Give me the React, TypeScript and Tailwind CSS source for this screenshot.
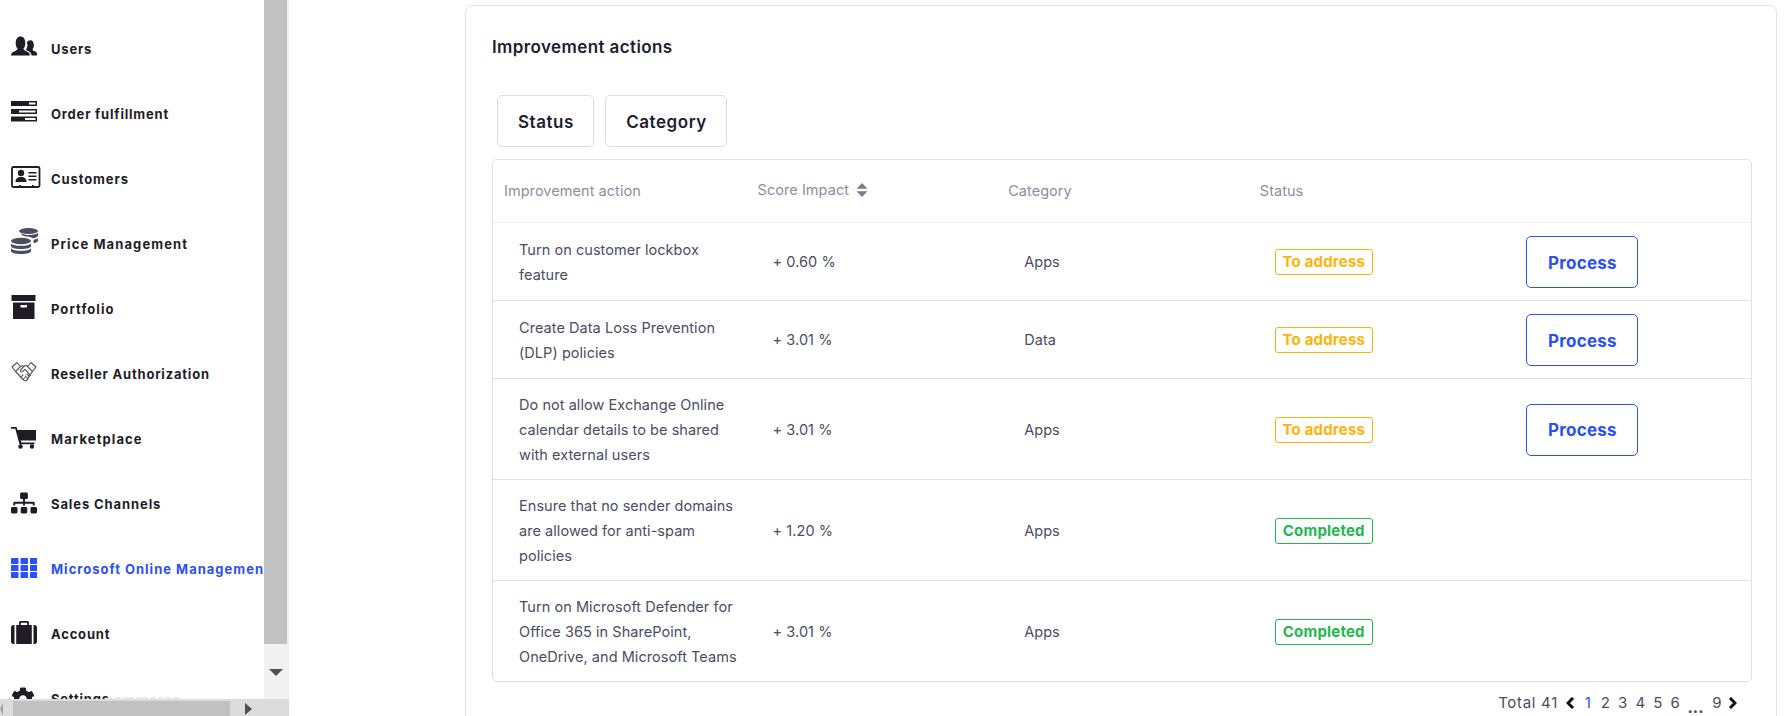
import { FaSitemap, FaCog } from "react-icons/fa";

const dark = "#1f1c26";

function UsersIcon() {
  return (
    <svg width="26" height="21" viewBox="0 0 26 20" preserveAspectRatio="none" fill={dark}>
      <path d="M0 18.500c0-2.600 2-3.400 4.200-4.300 1.800-.7 2.300-1.300 2.300-2.200-.9-.9-1.800-2.600-1.800-5C4.700 3 6.500 0.500 9.500 0.500s4.800 2.500 4.800 6.500c0 2.400-.9 4.100-1.800 5 0 .9.500 1.500 2.300 2.200 2.200.9 4.200 1.700 4.200 4.300z" />
      <path d="M15.800 6.500c.5-1.600 1.700-2.500 3.400-2.500 2.300 0 3.700 1.900 3.700 4.700 0 1.800-.7 3.200-1.400 3.900 0 .8.400 1.200 1.700 1.700 1.600.6 3 1.300 3 3.200v1h-5.600c-.4-2.600-2.300-3.700-4.500-4.600-.6-.3-1-.5-1.100-.8 1-1.300 1.500-3.200 1.500-5z" />
    </svg>
  );
}

function OrdersIcon() {
  return (
    <svg width="26" height="21" viewBox="0 0 26 21" fill={dark}>
      <path d="M0 0h26v5H0z" />
      <path d="M0 8h26v5H0z" />
      <path d="M0 15.500h26v5H0z" />
      <path d="M18 1.500h6.500v2H18zM8 9.500h16.500v2H8zM14 17h10.500v2H14z" fill="#fff" />
    </svg>
  );
}

function CustomersIcon() {
  return (
    <svg width="30" height="23" viewBox="0 0 30 23" fill={dark}>
      <rect x="1" y="1" width="27.500" height="20" rx="1.500" fill="none" stroke={dark} strokeWidth="1.800" />
      <circle cx="10" cy="7" r="3.200" />
      <path d="M4.500 16c0-3.400 2-5 5.500-5s5.500 1.600 5.500 5z" />
      <path d="M17.500 6h8v1.500h-8zM17.500 9.500h8v1.500h-8zM17.500 13h8v1.500h-8z" />
      <path d="M8 19h1.800v2.500H8zM21 19h1.800v2.500H21z" />
    </svg>
  );
}

function CoinsIcon() {
  const c = "#4a4c60";
  return (
    <svg width="28" height="26" viewBox="0 0 28 26" fill={c}>
      <ellipse cx="17.500" cy="3" rx="9.500" ry="3" />
      <path d="M27 5v2.500c0 1.300-2.500 2.500-5.500 2.800-1.500-1.200-4-1.800-6.500-1.800-1.500-.2-4-1-4.500-2V5c1.500 1.500 4 2 7 2s7.500-.5 9.500-2z" />
      <path d="M22.500 11.800c2-.3 3.500-.8 4.500-1.600v2.500c0 1-1.500 1.900-4.500 2.300z" />
      <ellipse cx="10" cy="13" rx="10" ry="3.200" />
      <path d="M0 15.500c1.500 1.700 5 2.300 10 2.300s8.500-.6 10-2.300v2.700c0 1.500-4 2.800-10 2.800s-10-1.300-10-2.800z" />
      <path d="M0 20.500c1.500 1.700 5 2.300 10 2.300s8.500-.6 10-2.300v2.500c0 1.700-4 3-10 3s-10-1.300-10-3z" />
    </svg>
  );
}

function BoxIcon() {
  return (
    <svg width="25" height="24" viewBox="0 0 25 24" fill={dark}>
      <path d="M0.500 0h24v6H.5z" />
      <path fillRule="evenodd" d="M2 7.500h21.500V24H2zM9.500 10v2.500h6.500V10z" />
    </svg>
  );
}

function HandshakeIcon() {
  return (
    <svg width="26" height="22" viewBox="0 0 26 22" fill="none" stroke="#55555f" strokeWidth="1.100" strokeLinejoin="round" strokeLinecap="round">
      <path d="M1 6l5-4.500 3.500 4-5 5z" />
      <path d="M25 6l-5-4.500-3.500 4 5 5z" />
      <path d="M9.500 5.500c1.500-1 2.500-.8 3.500-.2 1.200-.8 2.300-.9 3.500-.2" />
      <path d="M4.500 10.500l7 7.500c1 1.800 3.300 2 4.500.8l5.500-8.300" />
      <path d="M13 5.300L9.500 9c-.6 1 .8 2.200 2 1.500l2.500-2.200 5.500 6" />
      <path d="M10 16l2-2.200M12 18.500l2.300-2.500M15 20l2-2.300M18.500 15.500l-2.500-2.500M16.800 17.500l-2.300-2.500" />
    </svg>
  );
}

function CartIcon() {
  return (
    <svg width="26" height="22" viewBox="0 0 26 22" fill={dark}>
      <path d="M0 0h5.500l1 3H25v10.500H9.800l.5 2H23.500v1.800H8.500L4.300 1.700H0z" />
      <circle cx="9.500" cy="19.500" r="2.200" />
      <circle cx="21" cy="19.500" r="2.200" />
    </svg>
  );
}

function GridIcon() {
  const rows = [0, 7, 14];
  const cols = [0, 9.500, 19];
  return (
    <svg width="26" height="20" viewBox="0 0 26 20" fill="#2b50f5">
      {rows.map((y) => cols.map((x) => <rect key={`${x}-${y}`} x={x} y={y} width="7.500" height="6" rx="0.800" />))}
    </svg>
  );
}

function CaseIcon() {
  return (
    <svg width="26" height="23" viewBox="0 0 26 23" fill={dark}>
      <path d="M8 4V1.500C8 .7 8.700 0 9.500 0h7c.8 0 1.500.7 1.500 1.500V4h-1.800V1.800H9.800V4z" />
      <path d="M0 6.500C0 5 1 4 2.500 4H3.500v19H2.500C1 23 0 22 0 20.500z" />
      <path d="M5.200 4h15.600v19H5.200z" />
      <path d="M22.500 4h1C25 4 26 5 26 6.500v14c0 1.500-1 2.500-2.500 2.500h-1z" />
    </svg>
  );
}

const nav = [
  { label: "Users", icon: <UsersIcon />, box: "-mt-[7px]", track: "tracking-[0.8px]" },
  { label: "Order fulfillment", icon: <OrdersIcon />, box: "-mt-[6px]", track: "tracking-[0.8px]" },
  { label: "Customers", icon: <CustomersIcon />, box: "-mt-[5px]", track: "tracking-[0.9px]" },
  { label: "Price Management", icon: <CoinsIcon />, box: "-mt-[8px]", track: "tracking-[1.1px]" },
  { label: "Portfolio", icon: <BoxIcon />, box: "-mt-[6px]", track: "tracking-[1.05px]" },
  { label: "Reseller Authorization", icon: <HandshakeIcon />, box: "-mt-[5px]", track: "tracking-[0.8px]" },
  { label: "Marketplace", icon: <CartIcon />, box: "-mt-[3px]", track: "tracking-[1.1px]" },
  { label: "Sales Channels", icon: <FaSitemap size={26} color={dark} />, box: "-mt-[4px]", track: "tracking-[0.9px]" },
  { label: "Microsoft Online Management", icon: <GridIcon />, box: "-mt-[4px]", track: "tracking-[1px]", active: true },
  { label: "Account", icon: <CaseIcon />, box: "-mt-[4px]", track: "tracking-[0.8px]" },
  { label: "Settings", icon: <FaCog size={24} color={dark} />, box: "-mt-[2px]", track: "tracking-[0.8px]" },
];

type Row = {
  name: string[];
  score: string;
  category: string;
  status: "To address" | "Completed";
  process?: boolean;
};

const rows: Row[] = [
  { name: ["Turn on customer lockbox", "feature"], score: "+ 0.60 %", category: "Apps", status: "To address", process: true },
  { name: ["Create Data Loss Prevention", "(DLP) policies"], score: "+ 3.01 %", category: "Data", status: "To address", process: true },
  { name: ["Do not allow Exchange Online", "calendar details to be shared", "with external users"], score: "+ 3.01 %", category: "Apps", status: "To address", process: true },
  { name: ["Ensure that no sender domains", "are allowed for anti-spam", "policies"], score: "+ 1.20 %", category: "Apps", status: "Completed" },
  { name: ["Turn on Microsoft Defender for", "Office 365 in SharePoint,", "OneDrive, and Microsoft Teams"], score: "+ 3.01 %", category: "Apps", status: "Completed" },
];

function Sidebar() {
  return (
    <aside className="w-[289px] shrink-0 h-[716px] flex flex-col bg-white">
      <div className="flex flex-1 min-h-0">
        <div className="w-[264px] overflow-hidden relative">
          <nav className="pt-[17px]">
            {nav.map((n) => (
              <div key={n.label} className="h-[65px] flex items-center whitespace-nowrap">
                <div className={`w-[51px] pl-[11px] shrink-0 flex ${n.box}`}>{n.icon}</div>
                <span className={`text-[13px] font-bold ${n.track} ${n.active ? "text-[#2b50f5]" : "text-[#1f1c26]"}`}>
                  {n.label}
                </span>
              </div>
            ))}
          </nav>
          <span className="absolute left-[105px] top-[692px] text-[15px] leading-[18px] text-[#e2e2e2]">commerce</span>
        </div>
        <div className="w-[25px] flex flex-col bg-[#f1f1f1]">
          <div className="h-[644px] w-[23px] bg-[#c1c1c1]" />
          <div className="flex-1 flex items-center justify-center pr-[2px] pt-[2px]">
            <div className="w-0 h-0 border-l-[7px] border-r-[7px] border-t-[7px] border-l-transparent border-r-transparent border-t-[#505050]" />
          </div>
        </div>
      </div>
      <div className="h-[17px] bg-[#dcdcdc] flex items-end relative">
        <div className="w-[13px] flex items-center h-[15px]">
          <div className="w-0 h-0 border-r-[3px] border-y-[6px] border-y-transparent border-r-[#a0a0a0]" />
        </div>
        <div className="w-[217px] h-[15px] bg-[#c1c1c1]" />
        <div className="flex-1 flex items-center h-[15px] pl-[15px]">
          <div className="w-0 h-0 border-l-[7px] border-y-[6px] border-y-transparent border-l-[#505050]" />
        </div>
      </div>
    </aside>
  );
}

function Badge({ status }: { status: Row["status"] }) {
  const cls = status === "Completed" ? "text-[#1fb84f] border-[#1fb84f]" : "text-[#ffb20a] border-[#ffb20a]";
  return (
    <span className={`inline-flex items-center justify-center w-[98px] h-[26px] pt-[1px] rounded-[3px] border text-[15px] font-bold tracking-[0.2px] ${cls}`}>
      {status}
    </span>
  );
}

function SortIcon() {
  return (
    <svg width="12" height="14" viewBox="0 0 12 14" fill="#7b7d8e">
      <path d="M6 0l5.500 5.800H.5z" />
      <path d="M6 14L.5 8.200h11z" />
    </svg>
  );
}

function Pagination() {
  const pages = ["1", "2", "3", "4", "5", "6"];
  return (
    <div className="flex justify-end items-center h-[24px] mt-[9px] pr-[13px] text-[15px] text-[#4b4d5f]">
      <span className="mr-[8px] tracking-[0.7px]">Total 41</span>
      <svg width="9" height="12" viewBox="0 0 9 12" fill="none" stroke="#111" strokeWidth="3" className="mr-[4px]">
        <path d="M7 1L2 6l5 5" />
      </svg>
      {pages.map((p) => (
        <span key={p} className={`w-[17.5px] text-center ${p === "1" ? "text-[#2b50f5]" : ""}`}>
          {p}
        </span>
      ))}
      <span className="w-[17px] ml-[3px] text-center font-bold pt-[8px] leading-none text-[16px]">...</span>
      <span className="w-[26px] text-center">9</span>
      <svg width="9" height="12" viewBox="0 0 9 12" fill="none" stroke="#111" strokeWidth="3" className="-ml-[2px]">
        <path d="M2 1l5 5-5 5" />
      </svg>
    </div>
  );
}

function Card() {
  return (
    <section className="border border-[#e1e3e8] rounded-lg h-[760px] px-[26px] bg-white">
      <h2 className="mt-[29px] h-[24px] leading-[24px] text-[17px] font-semibold tracking-[0.4px] text-[#1e1e30]">Improvement actions</h2>
      <div className="flex gap-[11px] ml-[5px] mt-[36px]">
        <button className="w-[97px] h-[52px] pt-[3px] pl-[1px] border border-[#dcdee4] rounded-[5px] text-[17px] font-semibold tracking-[0.55px] text-[#1e1e30]">Status</button>
        <button className="w-[122px] h-[52px] pt-[3px] pl-[1px] border border-[#dcdee4] rounded-[5px] text-[17px] font-semibold tracking-[0.55px] text-[#1e1e30]">Category</button>
      </div>
      <div className="mt-[12px] w-[1260px] border border-[#dfe2e7] rounded-[5px] text-[14.5px] tracking-[0.05px] text-[#4b4d5f]">
        <div className="grid grid-cols-5 h-[63px] items-center border-b border-[#eceef2] text-[#8c8e9e]">
          <div className="pl-[11px]">Improvement action</div>
          <div className="pl-[13px] flex items-center gap-[7px] -mt-[2px]">
            Score Impact <SortIcon />
          </div>
          <div className="pl-[12px]">Category</div>
          <div className="pl-[12px]">Status</div>
          <div />
        </div>
        {rows.map((r, i) => (
          <div
            key={i}
            className={`grid grid-cols-5 items-center pt-[13px] pb-[12px] ${i < rows.length - 1 ? "border-b border-[#dfe2e7]" : ""}`}
          >
            <div className="pl-[26px] leading-[25px] whitespace-nowrap">
              {r.name.map((l) => (
                <div key={l}>{l}</div>
              ))}
            </div>
            <div className="pl-[28px]">{r.score}</div>
            <div className="pl-[28px]">{r.category}</div>
            <div className="pl-[27px]"><Badge status={r.status} /></div>
            <div className="pl-[27px]">
              {r.process && (
                <button className="w-[112px] h-[52px] border border-[#2b50f5] rounded-[5px] pt-[3px] text-[17px] font-bold tracking-[0.25px] text-[#2b50f5]">
                  Process
                </button>
              )}
            </div>
          </div>
        ))}
      </div>
      <Pagination />
    </section>
  );
}

export default function App() {
  return (
    <div className="flex h-[716px] overflow-hidden bg-white font-['Inter',sans-serif]">
      <Sidebar />
      <main className="flex-1 min-w-0 pl-[176px] pr-[9px] pt-[5px]">
        <Card />
      </main>
    </div>
  );
}
